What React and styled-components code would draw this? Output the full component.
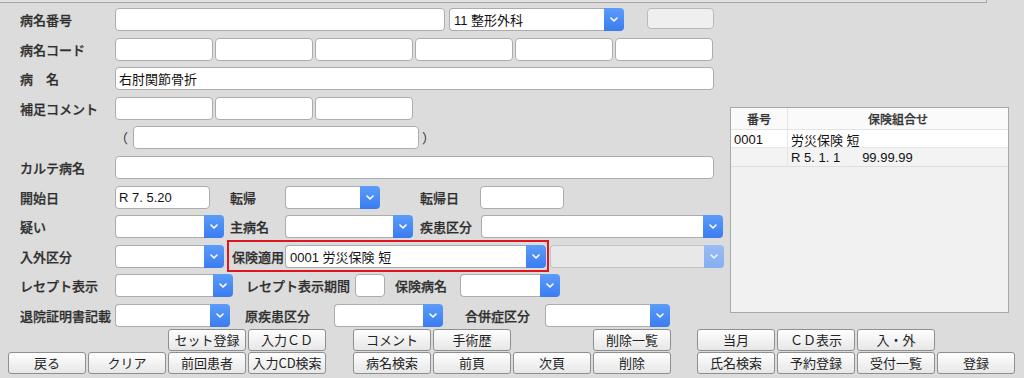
import React from "react";
import styled, { createGlobalStyle } from "styled-components";

const GlobalStyle = createGlobalStyle`
  html, body { margin: 0; padding: 0; background: #dcdcdc; }
  body { font-family: "Liberation Sans", "Noto Sans CJK JP", sans-serif; }
  * { box-sizing: border-box; }
`;

const Page = styled.div`
  width: 1024px;
  height: 378px;
  overflow: hidden;
  background: #dcdcdc;
  color: #222;
`;

const TopStrip = styled.div`
  width: 987px;
  height: 3px;
  background: #e2e2e2;
  border-bottom: 1px solid #a6a6a6;
  border-right: 1px solid #a6a6a6;
`;

const Main = styled.div`
  display: flex;
  align-items: flex-start;
`;

const Form = styled.div`
  width: 730px;
  flex: none;
  display: flex;
  flex-direction: column;
  gap: 6.6px;
  padding-top: 5px;
`;

const Row = styled.div`
  display: flex;
  align-items: center;
  height: 23px;
  padding-left: 20px;
`;

const Label = styled.span`
  flex: none;
  width: ${(p) => p.$w || 95}px;
  margin-left: ${(p) => p.$ml || 0}px;
  padding-left: ${(p) => p.$pl || 0}px;
  font-size: 13px;
  font-weight: 500;
  color: #2e2e2e;
  white-space: nowrap;
  font-family: "Noto Sans CJK JP", sans-serif;
  -webkit-text-stroke: 0.25px #2e2e2e;
`;

const Paren = styled.span`
  flex: none;
  width: 13px;
  margin-left: ${(p) => p.$ml || 0}px;
  font-size: 13px;
  color: #333;
  font-family: "Noto Sans CJK JP", sans-serif;
`;

const Field = styled.div`
  flex: none;
  width: ${(p) => p.$w}px;
  height: 23px;
  margin-left: ${(p) => p.$ml || 0}px;
  border: 1px solid #acacac;
  border-radius: 4px;
  background: #fff;
  padding: 0 3px;
  display: flex;
  align-items: center;
  font-size: 13px;
  color: #111;
  white-space: nowrap;
`;

const FieldSet = styled.div`
  display: flex;
  gap: 2px;
`;

const StaticBtn = styled.div`
  flex: none;
  align-self: flex-start;
  width: 67px;
  height: 21px;
  margin-left: 23px;
  border: 1px solid #b9b9b9;
  border-radius: 4px;
  background: #efefef;
`;

const SelectWrap = styled.div`
  flex: none;
  display: flex;
  width: ${(p) => p.$w}px;
  height: 23px;
  margin-left: ${(p) => p.$ml || 0}px;
`;

const SelectValue = styled.div`
  flex: 1;
  min-width: 0;
  border: 1px solid ${(p) => (p.$disabled ? "#c4c4c4" : "#acacac")};
  border-right: none;
  border-radius: 4px 0 0 4px;
  background: ${(p) => (p.$disabled ? "#e8e8e8" : "#fff")};
  padding: 0 4px;
  display: flex;
  align-items: center;
  font-size: 13px;
  color: #111;
  white-space: nowrap;
`;

const SelectArrow = styled.div`
  flex: none;
  width: 20px;
  border-radius: 0 4px 4px 0;
  background: ${(p) =>
    p.$disabled
      ? "linear-gradient(#9bbcf3, #86aef0)"
      : "linear-gradient(#5c9cf9, #3a7cf0)"};
  display: flex;
  align-items: center;
  justify-content: center;
`;

const InsBox = styled.div`
  flex: none;
  display: flex;
  align-items: center;
  height: 28px;
  margin-left: 5px;
  padding: 0 1px 0 3px;
  outline: 2px solid #e0161e;
`;

const Chevron = ({ light }) => (
  <svg width="8" height="5" viewBox="0 0 8 5">
    <path
      d="M1 1 L4 4 L7 1"
      fill="none"
      stroke={light ? "#eef4ff" : "#fff"}
      strokeWidth="1.6"
      strokeLinecap="round"
      strokeLinejoin="round"
    />
  </svg>
);

function Select({ w, ml, value, disabled }) {
  return (
    <SelectWrap $w={w} $ml={ml}>
      <SelectValue $disabled={disabled}>{value}</SelectValue>
      <SelectArrow $disabled={disabled}>
        <Chevron light={disabled} />
      </SelectArrow>
    </SelectWrap>
  );
}

/* right panel */
const Panel = styled.div`
  flex: none;
  width: 279px;
  height: 206px;
  margin-top: 104px;
  border: 1px solid #a8a8a8;
  background: #f1f1f1;
`;

const TRow = styled.div`
  display: grid;
  grid-template-columns: 57px 1fr;
  height: ${(p) => p.$h}px;
  background: ${(p) => p.$bg};
  border-bottom: 1px solid ${(p) => p.$line || "#e3e3e3"};
`;

const TCell = styled.div`
  display: flex;
  align-items: center;
  justify-content: ${(p) => (p.$head ? "center" : "flex-start")};
  padding-left: ${(p) => (p.$head ? 0 : p.$pl || 3)}px;
  border-right: ${(p) => (p.$first ? "1px solid #e6e6e6" : "none")};
  font-size: ${(p) => (p.$head ? 12 : 13)}px;
  font-weight: ${(p) => (p.$head ? 500 : 400)};
  color: ${(p) => (p.$head ? "#333" : "#111")};
  -webkit-text-stroke: ${(p) => (p.$head ? "0.25px #333" : "0")};
  white-space: pre;
  font-family: ${(p) =>
    p.$head ? '"Noto Sans CJK JP", sans-serif' : '"Liberation Sans", "Noto Sans CJK JP", sans-serif'};
`;

const Gap = styled.span`
  display: inline-block;
  width: ${(p) => p.$w}px;
`;

/* buttons */
const ButtonArea = styled.div`
  display: flex;
  padding-left: 8px;
  margin-top: 2px;
`;

const BtnGroup = styled.div`
  display: grid;
  grid-template-columns: repeat(4, 78px);
  grid-template-rows: 22px 22px;
  column-gap: 2px;
  row-gap: 1px;
  margin-left: ${(p) => p.$ml || 0}px;
`;

const Btn = styled.div`
  grid-column: ${(p) => p.$col};
  grid-row: ${(p) => p.$row};
  border: 1px solid #8f8f8f;
  border-radius: 3px;
  background: linear-gradient(#fefefe, #e7e7e7);
  display: flex;
  align-items: center;
  justify-content: center;
  font-size: 13px;
  color: #222;
  white-space: nowrap;
  font-family: "Noto Sans CJK JP", sans-serif;
`;

const groups = [
  {
    ml: 0,
    buttons: [
      [1, 3, "セット登録"],
      [1, 4, "入力ＣＤ"],
      [2, 1, "戻る"],
      [2, 2, "クリア"],
      [2, 3, "前回患者"],
      [2, 4, "入力CD検索"],
    ],
  },
  {
    ml: 27,
    buttons: [
      [1, 1, "コメント"],
      [1, 2, "手術歴"],
      [1, 4, "削除一覧"],
      [2, 1, "病名検索"],
      [2, 2, "前頁"],
      [2, 3, "次頁"],
      [2, 4, "削除"],
    ],
  },
  {
    ml: 26,
    buttons: [
      [1, 1, "当月"],
      [1, 2, "ＣＤ表示"],
      [1, 3, "入・外"],
      [2, 1, "氏名検索"],
      [2, 2, "予約登録"],
      [2, 3, "受付一覧"],
      [2, 4, "登録"],
    ],
  },
];

export default function App() {
  return (
    <Page>
      <GlobalStyle />
      <TopStrip />
      <Main>
        <Form>
          <Row>
            <Label>病名番号</Label>
            <Field $w={330} />
            <Select w={175} ml={4} value="11 整形外科" />
            <StaticBtn />
          </Row>
          <Row>
            <Label>病名コード</Label>
            <FieldSet>
              {[0, 1, 2, 3, 4, 5].map((i) => (
                <Field key={i} $w={98} />
              ))}
            </FieldSet>
          </Row>
          <Row>
            <Label>病　名</Label>
            <Field $w={599}>右肘関節骨折</Field>
          </Row>
          <Row>
            <Label>補足コメント</Label>
            <FieldSet>
              {[0, 1, 2].map((i) => (
                <Field key={i} $w={98} />
              ))}
            </FieldSet>
          </Row>
          <Row>
            <Label />
            <Paren>（</Paren>
            <Field $w={286} $ml={5} />
            <Paren $ml={3}>）</Paren>
          </Row>
          <Row>
            <Label>カルテ病名</Label>
            <Field $w={599} />
          </Row>
          <Row>
            <Label>開始日</Label>
            <Field $w={95}>R 7. 5.20</Field>
            <Label $ml={20} $w={55}>転帰</Label>
            <Select w={95} />
            <Label $ml={40} $w={60}>転帰日</Label>
            <Field $w={84} />
          </Row>
          <Row>
            <Label>疑い</Label>
            <Select w={109} />
            <Label $ml={6} $w={55}>主病名</Label>
            <Select w={128} />
            <Label $ml={7} $w={61}>疾患区分</Label>
            <Select w={242} />
          </Row>
          <Row>
            <Label>入外区分</Label>
            <Select w={109} />
            <InsBox>
              <Label $w={53}>保険適用</Label>
              <Select w={261} value="0001 労災保険 短" />
            </InsBox>
            <Select w={174} ml={3} disabled />
          </Row>
          <Row>
            <Label>レセプト表示</Label>
            <Select w={118} />
            <Label $ml={13} $w={109}>レセプト表示期間</Label>
            <Field $w={30} />
            <Label $ml={10} $w={65}>保険病名</Label>
            <Select w={100} />
          </Row>
          <Row>
            <Label>退院証明書記載</Label>
            <Select w={115} />
            <Label $ml={15} $w={89}>原疾患区分</Label>
            <Select w={109} />
            <Label $ml={22} $w={80}>合併症区分</Label>
            <Select w={125} />
          </Row>
        </Form>
        <Panel>
          <TRow $h={22} $bg="#fafafa">
            <TCell $head $first>番号</TCell>
            <TCell $head>保険組合せ</TCell>
          </TRow>
          <TRow $h={18} $bg="#ffffff" $line="#e8e8e8">
            <TCell $first>0001</TCell>
            <TCell $pl={3}>労災保険 短</TCell>
          </TRow>
          <TRow $h={19} $bg="#f3f3f3" $line="#dedede">
            <TCell $first />
            <TCell $pl={3}>
              R 5. 1. 1<Gap $w={22} />99.99.99
            </TCell>
          </TRow>
        </Panel>
      </Main>
      <ButtonArea>
        {groups.map((g, gi) => (
          <BtnGroup key={gi} $ml={g.ml}>
            {g.buttons.map(([r, c, t]) => (
              <Btn key={t} $row={r} $col={c}>
                {t}
              </Btn>
            ))}
          </BtnGroup>
        ))}
      </ButtonArea>
    </Page>
  );
}
